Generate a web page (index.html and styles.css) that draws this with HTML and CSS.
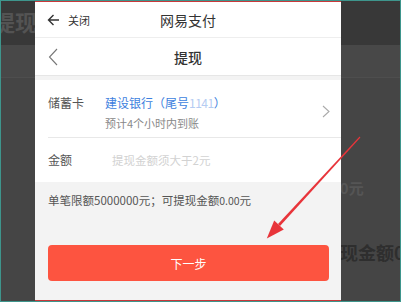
FILE: index.html
```html
<!DOCTYPE html>
<html>
<head>
    <title>网易支付 - 提现</title>
    <link rel="stylesheet" href="styles.css">
</head>
<body>
    <div class="screen">
        <!-- page behind the dialog -->
        <div class="backdrop">
            <div class="bg-top"><span class="bg-title">提现</span></div>
            <div class="bg-sub"></div>
        </div>
        <span class="bg-text bg-yuan">00元</span>
        <span class="bg-text bg-amount">现金额0.00</span>

        <div class="sheet">
            <div class="topbar">
                <div class="topbar-left">
                    <svg class="icon-back" width="13" height="12" viewBox="0 0 13 12">
                        <path d="M12 6H1.5M6.5 1L1.5 6l5 5" fill="none" stroke="#333" stroke-width="1.4"/>
                    </svg>
                    <span class="close-text">关闭</span>
                </div>
                <span class="topbar-title">网易支付</span>
            </div>

            <div class="navbar">
                <svg class="icon-chevron-left" width="10" height="18" viewBox="0 0 10 18">
                    <path d="M9 1L1.5 9L9 17" fill="none" stroke="#777" stroke-width="1.1"/>
                </svg>
                <span class="navbar-title">提现</span>
            </div>

            <div class="form-card">
                <div class="form-row card-row">
                    <span class="row-label">储蓄卡</span>
                    <div class="card-info">
                        <span class="bank-name">建设银行（尾号<span class="masked">1141</span>）</span>
                        <span class="bank-note">预计4个小时内到账</span>
                    </div>
                    <svg class="icon-chevron-right" width="8" height="13" viewBox="0 0 8 13">
                        <path d="M1 1l6 5.5L1 12" fill="none" stroke="#aaa" stroke-width="1.1"/>
                    </svg>
                </div>
                <div class="form-row amount-row">
                    <span class="row-label">金额</span>
                    <span class="amount-placeholder">提现金额须大于2元</span>
                </div>
            </div>

            <p class="limit-text">单笔限额5000000元；可提现金额<span class="small-num">0.00</span>元</p>

            <button class="next-btn">下一步</button>
        </div>

        <!-- annotation arrow drawn over the screenshot -->
        <svg class="annot-arrow" width="401" height="302" viewBox="0 0 401 302">
            <polygon points="360.4,137.5 359.6,136.5 278,223.9 280,226.1" fill="#e8343a"/>
            <polygon points="266.8,238.6 274.2,220.6 283.8,229.4" fill="#e8343a"/>
        </svg>
    </div>
</body>
</html>
```

FILE: styles.css
```css
* {
    box-sizing: border-box;
}
body {
    margin: 0;
    font-family: "Noto Sans CJK SC", "Noto Sans", sans-serif;
}
.screen {
    position: relative;
    width: 401px;
    height: 302px;
    overflow: hidden;
    border: 1px solid #3e958c;
    background-color: #454545;
    display: flex;
    padding-left: 34px;
}
.backdrop {
    position: absolute;
    left: 0;
    top: 0;
    right: 0;
}
.bg-top {
    height: 44px;
    background-color: #383838;
    position: relative;
}
.bg-title {
    position: absolute;
    left: -8px;
    top: 4px;
    font-size: 22px;
    font-weight: bold;
    color: #535353;
}
.bg-sub {
    height: 33px;
    background-color: #484848;
    border-bottom: 1px solid #4e4e4e;
}
.bg-text {
    position: absolute;
    font-weight: bold;
}
.bg-yuan {
    left: 330px;
    top: 176px;
    font-size: 15px;
    color: #555;
}
.bg-amount {
    left: 339px;
    top: 238px;
    font-size: 18px;
    color: #2e2e2e;
    white-space: nowrap;
}
.sheet {
    position: relative;
    width: 306px;
    height: 300px;
    background-color: #f3f3f3;
    border-top: 1px solid #c8383a;
    border-bottom: 1px solid #c8383a;
    display: flex;
    flex-direction: column;
}
.topbar {
    height: 36px;
    background-color: #fff;
    border-bottom: 1px solid #eee;
    position: relative;
    display: flex;
    align-items: center;
    justify-content: center;
}
.topbar-left {
    position: absolute;
    left: 12px;
    top: 0;
    bottom: 0;
    display: flex;
    align-items: center;
    gap: 8px;
}
.close-text {
    font-size: 11px;
    color: #333;
}
.topbar-title {
    font-size: 14px;
    color: #333;
}
.navbar {
    height: 38px;
    background-color: #fff;
    border-bottom: 1px solid #e6e6e6;
    position: relative;
    display: flex;
    align-items: center;
    justify-content: center;
}
.icon-chevron-left {
    position: absolute;
    left: 13px;
    top: 10px;
}
.navbar-title {
    font-size: 14px;
    font-weight: 500;
    color: #333;
}
.form-card {
    margin-top: 4px;
    background-color: #fff;
    padding-left: 13px;
}
.form-row {
    display: flex;
    align-items: flex-start;
}
.card-row {
    height: 58px;
    padding-top: 14px;
    border-bottom: 1px solid #e8e8e8;
    position: relative;
}
.row-label {
    width: 57px;
    font-size: 12px;
    line-height: 18px;
    color: #555;
}
.card-info {
    display: flex;
    flex-direction: column;
}
.bank-name {
    font-size: 12px;
    line-height: 18px;
    color: #3d7fde;
}
.masked {
    color: #b5ccf2;
    letter-spacing: -0.5px;
}
.bank-note {
    font-size: 11px;
    line-height: 16px;
    margin-top: 3px;
    color: #888;
}
.icon-chevron-right {
    position: absolute;
    right: 11px;
    top: 25px;
}
.amount-row {
    height: 44px;
    align-items: center;
}
.amount-placeholder {
    margin-left: 7px;
    font-size: 11.5px;
    color: #d2d2d2;
}
.limit-text {
    margin: 10px 0 0 13px;
    font-size: 11.5px;
    line-height: 16px;
    color: #555;
}
.small-num {
    font-size: 10.5px;
}
.next-btn {
    margin: 36px 12px 0 13px;
    height: 36px;
    background-color: #fd5440;
    color: #fff;
    border: none;
    border-radius: 4px;
    font-family: inherit;
    font-size: 12px;
}
.annot-arrow {
    position: absolute;
    left: -1px;
    top: -1px;
    pointer-events: none;
}
```
